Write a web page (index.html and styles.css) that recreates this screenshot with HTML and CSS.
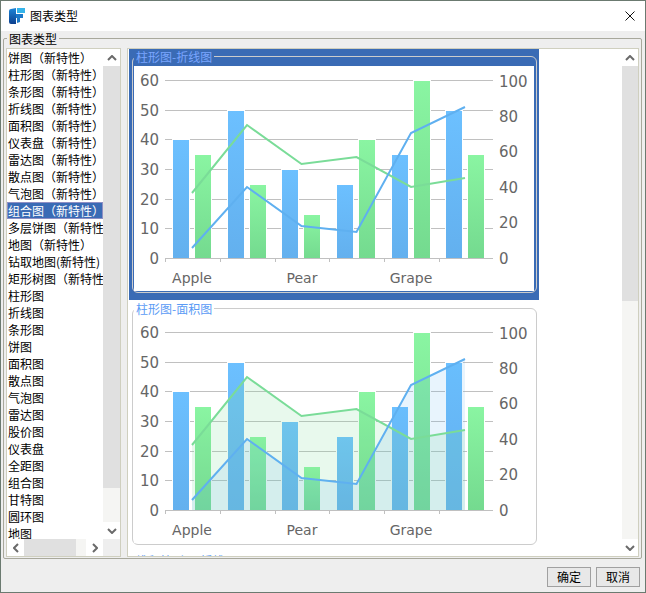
FILE: index.html
```html
<!DOCTYPE html>
<html lang="zh-cn">
<head>
    <meta charset="UTF-8">
    <title>图表类型</title>
    <link rel="stylesheet" href="styles.css">
</head>
<body>
<div class="window">
    <div class="titlebar">
        <svg class="logo" width="16" height="16" viewBox="0 0 16 16">
            <defs>
                <linearGradient id="logo-dark" x1="0" y1="0" x2="0" y2="1">
                    <stop offset="0" stop-color="#1c86d8"/>
                    <stop offset="1" stop-color="#0c3f8e"/>
                </linearGradient>
            </defs>
            <path d="M0 3 Q0 1 2 1 L7 0 L7 16 L2 16 Q0 16 0 14 Z" fill="url(#logo-dark)"/>
            <path d="M8 0 L16 0 L16 5 L8 5 Z" fill="#35b4ea"/>
            <path d="M7 6 L14 6 L14 10 L11 10 L11 14 L8 15 L8 10 L7 10 Z" fill="#1b78c8"/>
        </svg>
        <span class="title-text">图表类型</span>
        <svg class="close-icon" width="10" height="10" viewBox="0 0 10 10">
            <path d="M0.5 0.5 L9.5 9.5 M9.5 0.5 L0.5 9.5"/>
        </svg>
    </div>

    <fieldset class="type-group">
        <legend class="type-legend">图表类型</legend>

        <div class="list-box">
            <ul class="type-list">
                <li>饼图（新特性）</li>
                <li>柱形图（新特性）</li>
                <li>条形图（新特性）</li>
                <li>折线图（新特性）</li>
                <li>面积图（新特性）</li>
                <li>仪表盘（新特性）</li>
                <li>雷达图（新特性）</li>
                <li>散点图（新特性）</li>
                <li>气泡图（新特性）</li>
                <li class="selected">组合图（新特性）</li>
                <li>多层饼图（新特性）</li>
                <li>地图（新特性）</li>
                <li>钻取地图(新特性)</li>
                <li>矩形树图（新特性）</li>
                <li>柱形图</li>
                <li>折线图</li>
                <li>条形图</li>
                <li>饼图</li>
                <li>面积图</li>
                <li>散点图</li>
                <li>气泡图</li>
                <li>雷达图</li>
                <li>股价图</li>
                <li>仪表盘</li>
                <li>全距图</li>
                <li>组合图</li>
                <li>甘特图</li>
                <li>圆环图</li>
                <li>地图</li>
            </ul>
            <div class="vbar list-vbar">
                <div class="bar-btn"><svg class="arrow" width="10" height="6" viewBox="0 0 10 6"><path d="M1 5 L5 1 L9 5"/></svg></div>
                <div class="bar-thumb list-vthumb"></div>
                <div class="bar-track"></div>
                <div class="bar-btn"><svg class="arrow" width="10" height="6" viewBox="0 0 10 6"><path d="M1 1 L5 5 L9 1"/></svg></div>
            </div>
            <div class="hbar">
                <div class="bar-btn hbar-btn"><svg class="arrow" width="6" height="10" viewBox="0 0 6 10"><path d="M5 1 L1 5 L5 9"/></svg></div>
                <div class="bar-thumb hbar-thumb"></div>
                <div class="bar-track"></div>
                <div class="bar-btn hbar-btn"><svg class="arrow" width="6" height="10" viewBox="0 0 6 10"><path d="M1 1 L5 5 L1 9"/></svg></div>
            </div>
            <div class="corner"></div>
        </div>

        <div class="chart-panel">
            <div class="chart-pane">
                <div class="chart-item active">
                    <fieldset class="chart-card">
                        <legend class="chart-legend">柱形图-折线图</legend>
                        <svg class="chart" width="400" height="225" viewBox="134 66 400 225">
                            <defs>
                                <linearGradient id="bar-blue" x1="0" y1="0" x2="0" y2="1">
                                    <stop offset="0" stop-color="#6cc0ff"/>
                                    <stop offset="1" stop-color="#63b0ee"/>
                                </linearGradient>
                                <linearGradient id="bar-green" x1="0" y1="0" x2="0" y2="1">
                                    <stop offset="0" stop-color="#8af5a2"/>
                                    <stop offset="1" stop-color="#74da8f"/>
                                </linearGradient>
                                <g id="chart-base">
                                    <path class="grid" d="M165 80.5H493 M165 110.5H493 M165 139.5H493 M165 169.5H493 M165 199.5H493 M165 228.5H493"/>
                                    <g class="bar-b">
                                        <rect x="172.5" y="139.5" width="17" height="119"/>
                                        <rect x="227.5" y="110.5" width="17" height="148"/>
                                        <rect x="281.5" y="169.5" width="17" height="89"/>
                                        <rect x="336.5" y="184.5" width="17" height="74"/>
                                        <rect x="391.5" y="154.5" width="17" height="104"/>
                                        <rect x="445.5" y="110.5" width="17" height="148"/>
                                    </g>
                                    <g class="bar-g">
                                        <rect x="194.5" y="154.5" width="17" height="104"/>
                                        <rect x="249.5" y="184.5" width="17" height="74"/>
                                        <rect x="303.5" y="214.5" width="17" height="44"/>
                                        <rect x="358.5" y="139.5" width="17" height="119"/>
                                        <rect x="413.5" y="80.5" width="17" height="178"/>
                                        <rect x="467.5" y="154.5" width="17" height="104"/>
                                    </g>
                                    <path class="grid" d="M165 258.5H493 M165.5 258V262 M220.5 258V262 M275.5 258V262 M329.5 258V262 M384.5 258V262 M439.5 258V262"/>
                                    <g class="axis-left">
                                        <text x="159" y="86">60</text>
                                        <text x="159" y="116">50</text>
                                        <text x="159" y="145">40</text>
                                        <text x="159" y="175">30</text>
                                        <text x="159" y="205">20</text>
                                        <text x="159" y="234">10</text>
                                        <text x="159" y="264">0</text>
                                    </g>
                                    <g class="axis-right">
                                        <text x="499" y="87">100</text>
                                        <text x="499" y="122">80</text>
                                        <text x="499" y="157">60</text>
                                        <text x="499" y="193">40</text>
                                        <text x="499" y="228">20</text>
                                        <text x="499" y="264">0</text>
                                    </g>
                                    <g class="axis-bottom">
                                        <text x="192" y="283">Apple</text>
                                        <text x="302" y="283">Pear</text>
                                        <text x="411" y="283">Grape</text>
                                    </g>
                                </g>
                                <g id="chart-lines">
                                    <polyline class="line-g" points="192,193 247,125 301.5,164 356.5,157 411,187 465,178"/>
                                    <polyline class="line-b" points="192,248 247,187 301.5,226 356.5,232 411,133 465,107"/>
                                </g>
                            </defs>
                            <use href="#chart-base"/>
                            <use href="#chart-lines"/>
                        </svg>
                    </fieldset>
                </div>

                <div class="chart-item">
                    <fieldset class="chart-card">
                        <legend class="chart-legend">柱形图-面积图</legend>
                        <svg class="chart" width="400" height="225" viewBox="134 66 400 225">
                            <use href="#chart-base"/>
                            <polygon class="area-g" points="192,193 247,125 301.5,164 356.5,157 411,187 465,178 465,258 192,258"/>
                            <polygon class="area-b" points="192,248 247,187 301.5,226 356.5,232 411,133 465,107 465,258 192,258"/>
                            <use href="#chart-lines"/>
                        </svg>
                    </fieldset>
                </div>

                <div class="chart-item">
                    <fieldset class="chart-card">
                        <legend class="chart-legend">堆积柱形图-折线图</legend>
                    </fieldset>
                </div>
            </div>
            <div class="vbar pane-vbar">
                <div class="bar-btn"><svg class="arrow" width="10" height="6" viewBox="0 0 10 6"><path d="M1 5 L5 1 L9 5"/></svg></div>
                <div class="bar-thumb pane-vthumb"></div>
                <div class="bar-track"></div>
                <div class="bar-btn"><svg class="arrow" width="10" height="6" viewBox="0 0 10 6"><path d="M1 1 L5 5 L9 1"/></svg></div>
            </div>
        </div>
    </fieldset>

    <div class="footer">
        <button class="btn">确定</button>
        <button class="btn">取消</button>
    </div>
</div>
</body>
</html>
```

FILE: styles.css
```css
* {
    margin: 0;
    padding: 0;
    box-sizing: border-box;
}
html, body {
    height: 100%;
    overflow: hidden;
}
body {
    font-family: "Noto Sans CJK SC", "Liberation Sans", sans-serif;
    font-size: 12px;
    color: #000;
}
.window {
    width: 646px;
    height: 593px;
    display: flex;
    flex-direction: column;
    background: #eeeeee;
    border: 1px solid #6b7a70;
}
.titlebar {
    height: 30px;
    flex: none;
    display: flex;
    align-items: center;
    background: #fff;
    padding: 0 10px 0 8px;
}
.logo {
    flex: none;
    margin-right: 5px;
}
.title-text {
    flex: 1;
    line-height: 30px;
}
.close-icon path {
    fill: none;
    stroke: #111;
    stroke-width: 1;
}

/* group box */
.type-group {
    flex: 1;
    min-height: 0;
    min-width: 0;
    margin: 0 3px 0 2px;
    padding: 2px 2px 1px 2px;
    display: flex;
    gap: 6px;
    border: 1px solid #a8a89c;
    border-radius: 2px;
}
.type-legend {
    margin-left: 1px;
    padding: 0 2px;
    height: 15px;
    line-height: 15px;
}

/* left list */
.list-box {
    width: 115px;
    flex: none;
    display: grid;
    grid-template-columns: 96px 17px;
    grid-template-rows: 490px 17px;
    background: #fff;
    border: 1px solid #cfcfbf;
}
.type-list {
    list-style: none;
    overflow: hidden;
}
.type-list li {
    height: 17px;
    line-height: 17px;
    padding-left: 1px;
    white-space: nowrap;
}
.type-list .selected {
    background: #3a6bb5;
    color: #fff;
    outline: 1px solid #8f8fc4;
    outline-offset: -1px;
}
.corner {
    background: #eeeeee;
}

/* scrollbars */
.vbar {
    display: flex;
    flex-direction: column;
    background: #f5f5f3;
}
.list-vbar {
    grid-row: 1;
    grid-column: 2;
}
.hbar {
    display: flex;
    background: #f5f5f3;
}
.bar-btn {
    height: 17px;
    flex: none;
    display: flex;
    align-items: center;
    justify-content: center;
    background: #fff;
}
.hbar-btn {
    width: 17px;
    height: auto;
}
.bar-thumb {
    flex: none;
    background: #e0e0e0;
}
.bar-track {
    flex: 1;
    background: #f5f5f3;
}
.list-vthumb {
    height: 422px;
}
.pane-vthumb {
    height: 235px;
}
.hbar-thumb {
    width: 52px;
}
.arrow path {
    fill: none;
    stroke: #6a6a6a;
    stroke-width: 2;
}

/* right chart panel */
.chart-panel {
    flex: 1;
    min-width: 0;
    display: flex;
    background: #fff;
    border: 1px solid #cfcfbf;
    overflow: hidden;
}
.chart-pane {
    flex: 1;
    min-width: 0;
    overflow: hidden;
    padding-left: 1px;
}
.pane-vbar {
    width: 16px;
    flex: none;
}
.chart-item {
    width: 410px;
    height: 251px;
    margin-bottom: 1px;
    padding-left: 3px;
}
.chart-item.active {
    background: #3a6bb5;
}
.chart-card {
    width: 405px;
    height: 244px;
    padding: 2px 2px 1px 1px;
    border: 1px solid #cccccc;
    border-radius: 6px;
}
.chart-legend {
    margin-left: 0;
    padding: 0 2px;
    height: 15px;
    line-height: 15px;
    color: #5b9bf5;
}
.active .chart-legend {
    color: #7aa6ff;
}
.chart {
    display: block;
    background: #fff;
}
.grid {
    fill: none;
    stroke: #c0c0c0;
    stroke-width: 1;
}
.bar-b rect {
    fill: url(#bar-blue);
    stroke: #fff;
    stroke-width: 1;
}
.bar-g rect {
    fill: url(#bar-green);
    stroke: #fff;
    stroke-width: 1;
}
.line-g, .line-b {
    fill: none;
    stroke-width: 2;
}
.line-g {
    stroke: #7adc98;
}
.line-b {
    stroke: #5fb0f0;
}
.area-g {
    fill: #7fdc9a;
    fill-opacity: 0.18;
}
.area-b {
    fill: #5aaef0;
    fill-opacity: 0.14;
}
.axis-left text, .axis-right text, .axis-bottom text {
    font-family: "DejaVu Sans", sans-serif;
    fill: #666;
}
.axis-left text, .axis-right text {
    font-size: 15px;
}
.axis-left text {
    text-anchor: end;
}
.axis-bottom text {
    font-size: 14px;
    text-anchor: middle;
}

/* bottom buttons */
.footer {
    height: 33px;
    flex: none;
    display: flex;
    justify-content: flex-end;
    gap: 5px;
    padding: 8px 5px 0 0;
}
.btn {
    width: 44px;
    height: 20px;
    font-family: inherit;
    font-size: 12px;
    line-height: 18px;
    color: #000;
    background: #e8e8e8;
    border: 1px solid #a0a0a0;
}
```
